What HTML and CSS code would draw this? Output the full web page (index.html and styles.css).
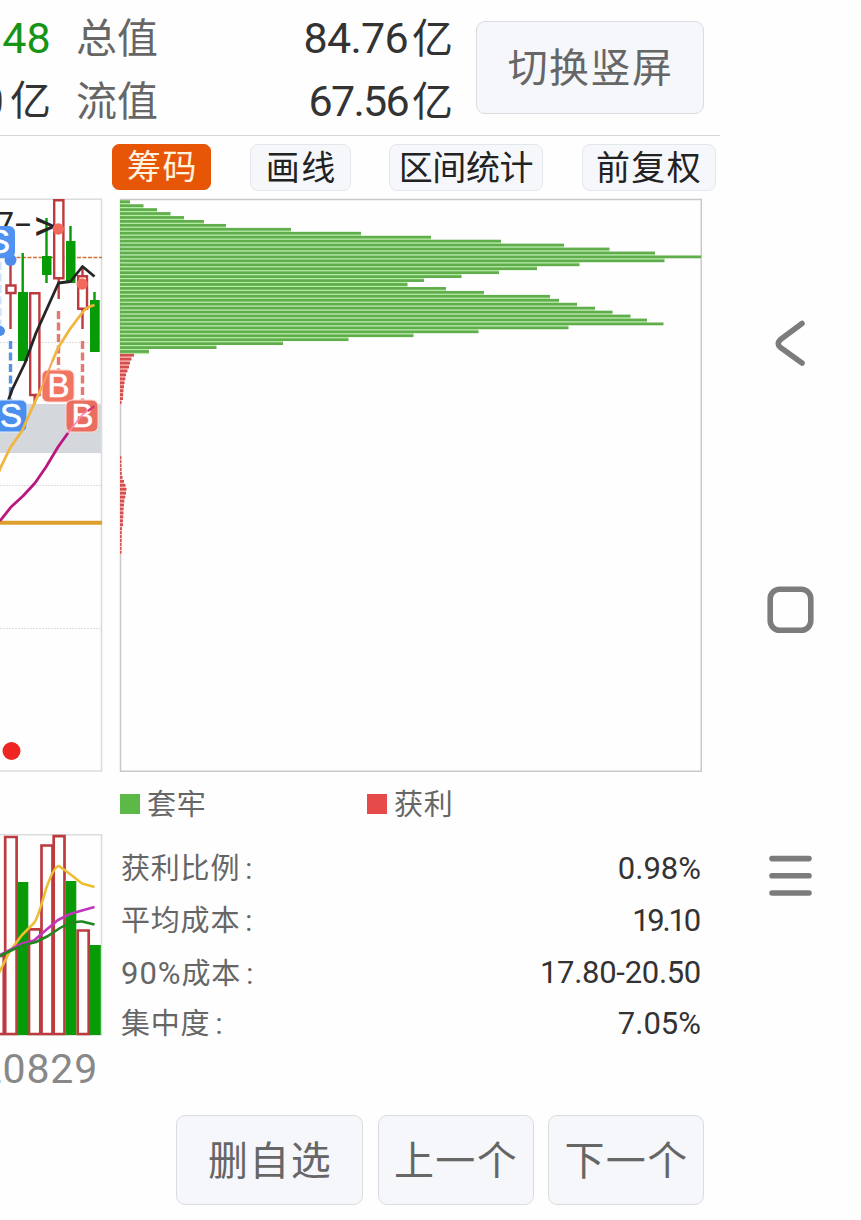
FILE: index.html
```html
<!DOCTYPE html>
<html lang="zh-CN">
<head>
<meta charset="utf-8">
<title>筹码分布</title>
<link rel="stylesheet" href="styles.css">
</head>
<body>
<div class="screen">
  <main class="app">
    <header class="quote">
      <div class="quote-rows">
        <div class="quote-row"><span class="prev up">.48</span><span class="label">总值</span><span class="value">84.76<i>亿</i></span></div>
        <div class="quote-row"><span class="prev">0<i>亿</i></span><span class="label">流值</span><span class="value second">67.56<i>亿</i></span></div>
      </div>
      <button class="btn rotate">切换竖屏</button>
    </header>
    <nav class="tools">
      <button class="tool active">筹码</button>
      <button class="tool">画线</button>
      <button class="tool wide">区间统计</button>
      <button class="tool adjust">前复权</button>
    </nav>
    <div class="content">
      <section class="kline">
        <svg width="103" height="846" viewBox="0 194 103 846">
          <rect x="0" y="404" width="101" height="49" fill="#d4d7dc"/>
          <g stroke="#dedede" stroke-width="1" stroke-dasharray="2 1"><path d="M0 342.5H101M0 485.5H101M0 628.5H101"/></g>
          <path d="M-2 199.3H101.5V771H-2M-2 834.8H101.5V1035H-2" fill="none" stroke="#dcdcdc" stroke-width="1.6"/>
          <path d="M0 257.5H102" stroke="#d2733a" stroke-width="1.3" stroke-dasharray="4 1.5"/>
          <path d="M0 522.7H102" stroke="#df9f2d" stroke-width="4"/>
          <g fill="#fff" stroke="#bd3b3f" stroke-width="2.4">
            <path d="M10.5 255V285M10.5 293V329M34.7 396V404M58.7 278V299M82.5 266V276M82.5 309V329"/>
            <path d="M6.5 285.5h9v7.5h-9zM30.2 293.3h9.2v101.7h-9.2zM54.2 200.3h9.2v78h-9.2zM78.2 276.3h8.8v32.5h-8.8z"/>
          </g>
          <g fill="#079b07">
            <path d="M18 292h10v69H18zM42 256h9.5v19H42zM66 241h9.5v42H66zM90 300h9.7v52H90z"/>
            <path d="M21.5 253h2.4v40h-2.4zM45.3 218h2.4v65h-2.4zM69.3 226h2.4v20h-2.4zM93.3 292h2.4v10h-2.4z"/>
          </g>
          <g fill="none" stroke-width="3.4" stroke-dasharray="8 3.5">
            <path d="M0 262V330" stroke="#cfe5fb"/>
            <path d="M10.5 341V401" stroke="#5693e8"/>
            <path d="M58.5 311V370M82.5 341V400" stroke="#e5796e"/>
          </g>
          <path d="M-2 430L0 424L12 390L25 363L36 333L58.5 283L70.5 281.5L82.5 266.5L94.5 276.5" fill="none" stroke="#252525" stroke-width="2.8" stroke-linejoin="round"/>
          <g class="axis-text"><text x="-5" y="236" font-size="34">7</text><text x="15" y="235" font-size="33" textLength="16" lengthAdjust="spacingAndGlyphs">-</text><text x="33.5" y="240" font-size="42" textLength="22" lengthAdjust="spacingAndGlyphs">&gt;</text></g>
          <circle cx="58.3" cy="229" r="5.7" fill="#f26a5c"/>
          <circle cx="82.2" cy="284" r="5.7" fill="#f26a5c"/>
          <circle cx="10.5" cy="260" r="6" fill="#4d8beb"/>
          <circle cx="0" cy="331" r="5" fill="#4d8beb"/>
          <g class="mark">
            <rect x="-17" y="226" width="32" height="32" rx="6" fill="#4f92f1"/><text x="-1" y="253">S</text>
            <rect x="-5" y="400" width="32" height="32" rx="6" fill="#4a8fee" stroke="#dceaff"/><text x="11" y="427">S</text>
            <rect x="42" y="370" width="32" height="32" rx="6" fill="#f27563" stroke="#ffd8cf"/><text x="58.5" y="397">B</text>
            <rect x="66" y="400" width="32" height="32" rx="6" fill="#ea6d62" stroke="#ffd8cf"/><text x="82.5" y="427">B</text>
          </g>
          <g fill="none" stroke-width="2.8" stroke-linejoin="round">
            <path d="M-2 474L0 469L10 448L22 431L34 404L42 387" stroke="#f0b63f"/>
            <path d="M42 387L46 377L52 362" stroke="#f6a055" stroke-width="2"/>
            <path d="M52 362L58 348L70 329L82 313Q86 307 94.5 305" stroke="#f0b63f"/>
            <path d="M0 521L11 507L23 496L35 483L46 467L58 447L68 433" stroke="#bb1781"/>
            <path d="M68 433L82 415L90 409" stroke="#ff87b0" stroke-width="1.6"/>
            <path d="M88 411L94.5 406" stroke="#d03a72" stroke-width="2.4"/>
          </g>
          <circle cx="11.5" cy="751" r="9" fill="#ee2523"/>
          <g fill="#fff" stroke="#bd3b3f" stroke-width="2.7">
            <path d="M-8 956H3.8V1034H-8zM5.2 837H16.6V1034H5.2zM29 929.3H40.3V1034H29zM41.5 845.5H52.5V1034H41.5zM53.7 836.2H64.5V1034H53.7zM77.7 930.5H88.7V1034H77.7z"/>
          </g>
          <path d="M17.8 882H28.3V1035H17.8zM66 881H76.3V1035H66zM90 945H100.8V1035H90z" fill="#079b07"/>
          <g fill="none" stroke-width="2.6" stroke-linejoin="round">
            <path d="M-1 973L10 951L22 935L34 923Q38 918 46 889Q54 866 59 866L70 874L82 883.5L94.5 887" stroke="#edbd32"/>
            <path d="M0 955L12 949L22 943.5L34 940.5L46 930L58 920L70 914L82 910.5L94.5 907" stroke="#c035bd"/>
            <path d="M0 956L12 950L24 945L36 942L48 936L60 928Q72 921 82 921.5L94.5 924.5" stroke="#1e881e"/>
          </g>
        </svg>
        <div class="date">20829</div>
      </section>
      <section class="chips">
        <svg id="chip-chart" class="chip-chart" width="584" height="574" viewBox="119 198 584 574">
          <path d="M120.5 199.5H701.3V771.3H120.5Z" fill="none" stroke="#c9c9c9" stroke-width="1.5"/>
        </svg>
        <div class="legend">
          <span class="key"><b class="swatch loss"></b><span>套牢</span></span>
          <span class="key"><b class="swatch gain"></b><span>获利</span></span>
        </div>
        <dl class="stats">
          <div><dt>获利比例<em>:</em></dt><dd>0.98%</dd></div>
          <div><dt>平均成本<em>:</em></dt><dd class="tight">19.10</dd></div>
          <div><dt><span class="latin">90%</span>成本<em>:</em></dt><dd class="range">17.80-20.50</dd></div>
          <div><dt>集中度<em>:</em></dt><dd>7.05%</dd></div>
        </dl>
      </section>
    </div>
    <footer class="actions">
      <button class="btn remove">删自选</button>
      <button class="btn">上一个</button>
      <button class="btn">下一个</button>
    </footer>
  </main>
  <aside class="sysnav">
    <svg width="50" height="50" viewBox="0 0 50 50"><path d="M37 4.5L15.5 20.5Q11 25 15.5 28.5L37 44" /></svg>
    <svg width="50" height="50" viewBox="0 0 50 50"><rect x="5.2" y="4.2" width="40.6" height="41" rx="9.5"/></svg>
    <svg width="50" height="50" viewBox="0 0 50 50"><path d="M7 7.6H44M7 24.8H44M7 42H44"/></svg>
  </aside>
</div>
<script src="chart.js"></script>
</body>
</html>
```
FILE: styles.css
```css
* { box-sizing: border-box; }
body { margin: 0; background: #fefefe; color: #333; font-family: Roboto, "Noto Sans CJK SC", sans-serif; }
button { font: inherit; margin: 0; padding: 0; white-space: nowrap; }
i, em { font-style: normal; }
.screen { width: 861px; height: 1220px; display: grid; grid-template-columns: 720px 141px; overflow: hidden; }
.app { display: flex; flex-direction: column; min-width: 0; }
.quote { height: 136px; border-bottom: 1px solid #d6d6d6; display: flex; justify-content: space-between; padding: 21px 16px 0 0; }
.quote-rows { width: 453px; margin-top: -14px; }
.quote-row { height: 63px; display: grid; grid-template-columns: 51px 108px 1fr; column-gap: 25px; line-height: 63px; font-size: 43px; }
.quote-row i, .label { font-size: 41px; letter-spacing: 0; }
.prev { display: flex; justify-content: flex-end; overflow: hidden; letter-spacing: .2px; }
.prev i { margin-left: 6px; }
.up { color: #159415; }
.label { color: #666; padding-top: 1px; }
.value { text-align: right; letter-spacing: -0.7px; }
.second { letter-spacing: -1.7px; }
.value i { margin-left: 4px; }
.btn { height: 90px; width: 156px; border: 1px solid #dadddf; border-radius: 9px; background: #f6f7fa; color: #666; font-size: 40px; letter-spacing: 1.4px; text-indent: 1px; padding-bottom: 4px; }
.rotate { width: 228px; height: 93px; padding-bottom: 5px; }
.tools { height: 62px; padding: 8px 4px 0 112px; display: flex; }
.tool { height: 47px; width: 101px; border: 1.5px solid #e3e6ea; border-radius: 8px; background: #f6f7fa; color: #222; font-size: 34px; line-height: 42px; letter-spacing: 1.5px; padding-left: 2px; }
.tool.active { width: 99px; margin-right: 39px; background: #e75606; border-color: #e75606; color: #fff2df; height: 46px; border-radius: 7px; }
.tool.wide { width: 155px; margin: 0 39px 0 38px; letter-spacing: -0.4px; padding: 0; }
.tool.adjust { width: 134px; padding: 0; }
.content { height: 917px; display: grid; grid-template-columns: 103px 584px; column-gap: 16px; }
.kline { margin-top: -4px; overflow: hidden; }
.kline svg, .chip-chart { display: block; }
.axis-text { fill: #252525; font-family: Roboto, sans-serif; }
.mark { font: 500 33px "Liberation Sans", sans-serif; text-anchor: middle; }
.mark text { fill: #fff; stroke: #fff; stroke-width: .6px; }
.date { width: 98px; display: flex; justify-content: flex-end; overflow: hidden; color: #888; font-size: 41px; line-height: 59px; letter-spacing: .8px; }
.legend { display: grid; grid-template-columns: 247px 1fr; height: 64px; padding-left: 1px; color: #666; font-size: 29px; letter-spacing: .7px; }
.key { display: flex; align-items: center; gap: 7px; }
.key span { padding-bottom: 4px; }
.swatch { width: 20px; height: 20px; }
.loss { background: #5cb947; }
.gain { background: #e64a4a; }
.stats { margin: 7px 2px 0 2px; font-size: 30px; }
.stats div { display: flex; justify-content: space-between; height: 51.8px; line-height: 51.8px; }
dt { color: #666; font-size: 29px; letter-spacing: .8px; padding-top: 1px; }
dt em { margin-left: 5px; }
.latin { font-size: 31px; letter-spacing: 1px; }
dd { margin: 0; font-size: 31px; }
.tight { letter-spacing: -2.2px; padding-right: 2px; }
.range { letter-spacing: -.3px; }
.actions { padding: 0 16px 0 176px; display: flex; justify-content: space-between; }
.remove { width: 187px; }
.sysnav { display: flex; flex-direction: column; padding: 319px 0 0 45px; gap: 216px; }
.sysnav svg { fill: none; stroke: #7c7c7c; stroke-width: 5.6; stroke-linecap: round; stroke-linejoin: round; }
```
FILE: chart.js
```js
// Right edge of every price level, from the highest price down.
const trapped = [130, 143.5, 157, 170.5, 184, 204, 226, 291, 361, 431, 501, 564, 609.5, 655, 701,
  664.5, 579.5, 537, 499, 461.5, 424, 407.5, 446, 484, 550, 559, 577, 595, 612.5, 630.5, 647,
  663.5, 568.5, 478.5, 413.5, 348.5, 283, 216.5, 149];
const profit = [134, 131.5, 130, 129, 127.5, 126, 125.3, 124.5, 124, 123.5, 123.2, 123, 121.5];
const lower = [121.4, 121.4, 121.5, 121.6, 121.8, 122.5, 124, 125.5, 126.5, 126, 125.3, 124.3, 124,
  123.6, 123.5, 123.3, 123, 123, 122, 121.8, 121.7, 121.7, 121.5, 121.5, 121.5];

const STEP = 3.942;
const chart = document.getElementById('chip-chart');

function drawLevels(levels, top, color, gapColor) {
  levels.forEach((right, i) => {
    const y = top + i * STEP;
    const next = Math.min(right, levels[i + 1] ?? right);
    addRect(y + 1.3, STEP - 2.6, next, gapColor);
    addRect(y - 1.4, 2.8, right, color);
  });
}

function addRect(y, height, right, fill) {
  const rect = document.createElementNS('http://www.w3.org/2000/svg', 'rect');
  rect.setAttribute('x', 120);
  rect.setAttribute('y', y);
  rect.setAttribute('width', right - 120);
  rect.setAttribute('height', height);
  rect.setAttribute('fill', fill);
  chart.appendChild(rect);
}

drawLevels(trapped, 201.7, '#5fae4b', '#b5efa4');
drawLevels(profit, 355.2, '#d64d4d', '#ffb9b9');
drawLevels(lower, 457.7, '#d64d4d', '#ffc9c9');
```
